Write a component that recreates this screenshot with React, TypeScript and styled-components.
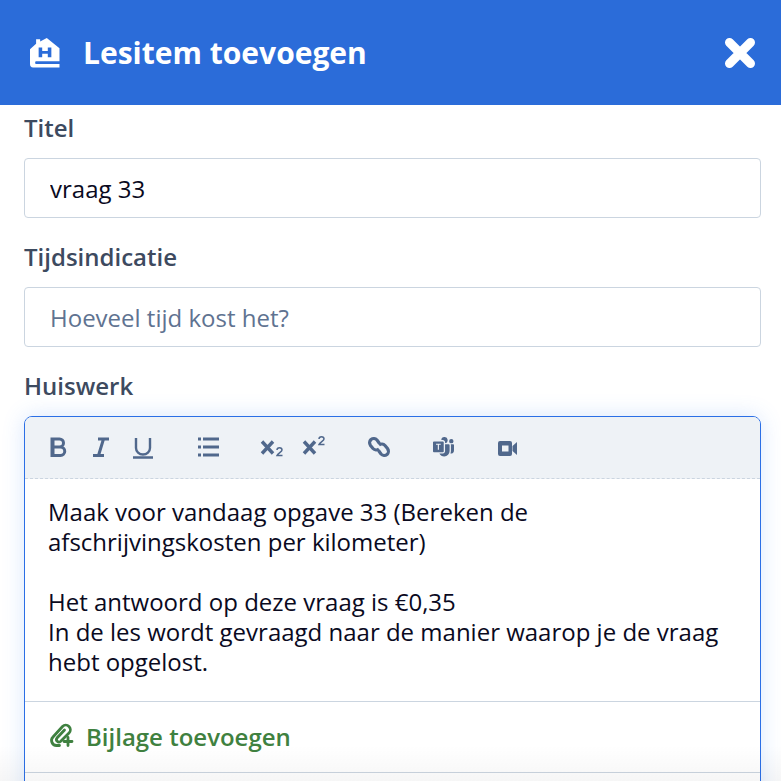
import React from 'react'
import styled, { createGlobalStyle } from 'styled-components'
import { BsMicrosoftTeams } from 'react-icons/bs'

const GlobalStyle = createGlobalStyle`
  html, body {
    margin: 0;
    height: 781px;
    overflow: hidden;
    background: #fff;
    font-family: 'Open Sans', 'Noto Sans', sans-serif;
  }
  * { box-sizing: border-box; }
`

const Page = styled.div`
  position: relative;
  height: 781px;
  overflow: hidden;
`

const Header = styled.header`
  height: 105px;
  background-color: #2b6cd9;
  display: flex;
  align-items: center;
  padding: 0 24px 0 30px;
  color: #fff;
`

const HeaderTitle = styled.h1`
  flex: 1;
  margin: 0 0 0 23px;
  font-size: 30px;
  font-weight: 700;
  line-height: 36px;
`

const CloseBtn = styled.button`
  width: 34px;
  height: 34px;
  padding: 0;
  border: none;
  background: transparent;
  display: flex;
`

const Form = styled.form`
  height: 676px;
  overflow: hidden;
  padding: 8px 20px 0 24px;
`

const Label = styled.label`
  display: block;
  height: 45px;
  font-size: 24px;
  line-height: 30px;
  font-weight: 600;
  color: #3d4a5f;
`

const TextInput = styled.input`
  display: block;
  width: 100%;
  height: 60px;
  margin-bottom: 24px;
  padding: 0 25px;
  border: 1px solid #cbd5e0;
  border-radius: 4px;
  font-family: inherit;
  font-size: 24px;
  color: #0a0a1e;
  outline: none;
  &::placeholder {
    color: #5f7391;
    opacity: 1;
  }
`

const Editor = styled.div`
  border: 1px solid #2b6fe6;
  border-radius: 8px;
  box-shadow: 0 0 22px rgba(66, 133, 244, 0.2);
`

const Toolbar = styled.div`
  height: 62px;
  display: flex;
  align-items: center;
  padding: 0 0 1px 22px;
  background-color: #eef2f6;
  border-bottom: 1px dashed #cbd5e0;
  border-radius: 7px 7px 0 0;
`

const ToolBtn = styled.span<{ $gap?: number }>`
  display: flex;
  justify-content: center;
  align-items: center;
  width: 24px;
  height: 24px;
  margin-right: ${p => p.$gap ?? 0}px;
  color: #50688c;
`

const Content = styled.div`
  height: 223px;
  padding: 18px 23px 0;
  font-size: 24px;
  line-height: 30px;
  color: #0a0a1e;
  border-bottom: 1px solid #cbd5e0;
`

const Para = styled.p`
  margin: 0 0 30px;
`

const Attach = styled.div`
  height: 71px;
  display: flex;
  align-items: center;
  gap: 11px;
  padding: 0 0 2px 24px;
  font-size: 24px;
  font-weight: 600;
  color: #3f8140;
  border-bottom: 1px solid #cbd5e0;
`

const EditorFoot = styled.div`
  height: 60px;
`

const BottomFade = styled.div`
  position: absolute;
  left: 0;
  right: 0;
  bottom: 0;
  height: 36px;
  background: linear-gradient(rgba(0, 0, 0, 0), rgba(0, 0, 0, 0.035));
  pointer-events: none;
`

const HomeIcon = () => (
  <svg width="30" height="30" viewBox="0 0 29.500 26.500" preserveAspectRatio="none" fill="#fff">
    <path
      fillRule="evenodd"
      d="M6 1h4v2l6.500-3L29 9v11.500H5.500q-1 1.250 0 2.500H29v3H3q-3 0-3-3V10l6-5zM8.500 8.500v8.500H12v-3h5.500v3H21V8.500h-3.500v3H12v-3z"
    />
  </svg>
)

const CloseIcon = () => (
  <svg width="34" height="34" viewBox="0 0 34 34">
    <path d="M6.500 6.500 27.500 27.500M27.500 6.500 6.500 27.500" stroke="#fff" strokeWidth="9" strokeLinecap="round" />
  </svg>
)

const Glyph = ({ d, w = 3 }: { d: string; w?: number }) => (
  <svg width="24" height="24" viewBox="0 0 24 24" fill="none" stroke="currentColor" strokeWidth={w}>
    <path d={d} />
  </svg>
)

const ScriptIcon = ({ sup }: { sup?: boolean }) => (
  <svg width="24" height="24" viewBox="0 0 24 24">
    <path d="M2 6.500l11 12M13 6.500 2 18.500" stroke="currentColor" strokeWidth="3.400" fill="none" />
    <path
      d={sup ? 'M17 4c0-3 5-3 5 0 0 2-4 3-5 5.500h5.500' : 'M17 15c0-3 5-3 5 0 0 2-4 3-5 5.500h5.500'}
      stroke="currentColor"
      strokeWidth="1.500"
      fill="none"
    />
  </svg>
)

const LinkIcon = () => (
  <svg width="24" height="24" viewBox="0 0 24 24" fill="none" stroke="currentColor" strokeWidth="3.200">
    <path d="M12.500 8.500 10 5a4.500 4.500 0 0 0-6-.5 4.500 4.500 0 0 0-.5 6l2.500 3a4.500 4.500 0 0 0 6 .5" />
    <path d="M11.500 15.500 14 19a4.500 4.500 0 0 0 6 .5 4.500 4.500 0 0 0 .5-6l-2.500-3a4.500 4.500 0 0 0-6-.5" />
  </svg>
)

const VideoIcon = () => (
  <svg width="24" height="24" viewBox="0 0 24 24" fill="currentColor">
    <path fillRule="evenodd" d="M4 6h10a2 2 0 0 1 2 2v11a2 2 0 0 1-2 2H4a2 2 0 0 1-2-2V8a2 2 0 0 1 2-2zM6 10.500v6h6.500v-6z" />
    <path d="M16.500 11l4.500-4v13l-4.500-4z" />
  </svg>
)

const ClipIcon = () => (
  <svg width="26" height="26" viewBox="0 0 26 26" fill="none" stroke="#3f8140" strokeWidth="2.800" strokeLinecap="round">
    <path d="M10.500 22.500H7.500a5 5 0 0 1-3.500-8.500L13.500 3.500a4.500 4.500 0 0 1 6.500 6.500L11.500 18.500a2.500 2.500 0 0 1-3.500-3.500L15.500 7" />
    <path d="M19 14.500v8M15 18.500h8" />
  </svg>
)

const App = () => (
  <Page>
    <GlobalStyle />
    <Header>
      <HomeIcon />
      <HeaderTitle>Lesitem toevoegen</HeaderTitle>
      <CloseBtn aria-label="Sluiten">
        <CloseIcon />
      </CloseBtn>
    </Header>
    <Form>
      <Label>Titel</Label>
      <TextInput defaultValue="vraag 33" />
      <Label>Tijdsindicatie</Label>
      <TextInput placeholder="Hoeveel tijd kost het?" />
      <Label>Huiswerk</Label>
      <Editor>
        <Toolbar>
          <ToolBtn $gap={18}>
            <Glyph d="M5 4h7.500a4 4 0 0 1 0 8H5zM5 12h8.500a4.200 4.200 0 0 1 0 8.500H5zM6 3v18" />
          </ToolBtn>
          <ToolBtn $gap={18}>
            <Glyph d="M9 4h11M4 20.500h11M14.500 4 9.500 20.500" />
          </ToolBtn>
          <ToolBtn $gap={41}>
            <Glyph d="M5 3v10a7 6.500 0 0 0 14 0V3M2 22.500h20" w={2.400} />
          </ToolBtn>
          <ToolBtn $gap={40}>
            <Glyph d="M7 4h16M7 12h16M7 20h16M2 4h3M2 12h3M2 20h3" />
          </ToolBtn>
          <ToolBtn $gap={18}>
            <ScriptIcon />
          </ToolBtn>
          <ToolBtn $gap={41}>
            <ScriptIcon sup />
          </ToolBtn>
          <ToolBtn $gap={40}>
            <LinkIcon />
          </ToolBtn>
          <ToolBtn $gap={41}>
            <BsMicrosoftTeams size={21} />
          </ToolBtn>
          <ToolBtn>
            <VideoIcon />
          </ToolBtn>
        </Toolbar>
        <Content>
          <Para>Maak voor vandaag opgave 33 (Bereken de afschrijvingskosten per kilometer)</Para>
          <Para>
            Het antwoord op deze vraag is €0,35
            <br />
            In de les wordt gevraagd naar de manier waarop je de vraag hebt opgelost.
          </Para>
        </Content>
        <Attach>
          <ClipIcon />
          Bijlage toevoegen
        </Attach>
        <EditorFoot />
      </Editor>
    </Form>
    <BottomFade />
  </Page>
)

export default App
